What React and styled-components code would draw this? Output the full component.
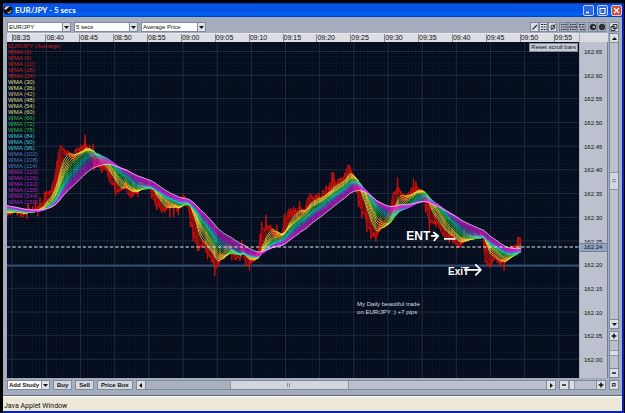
import React from "react";
import styled, { createGlobalStyle, css } from "styled-components";

const Global = createGlobalStyle`
  * { box-sizing: border-box; }
  html, body { margin: 0; background: #000; }
  body { font-family: "Liberation Sans", Arial, sans-serif; font-size: 6px; color: #111; }
  button, select, input { font: inherit; color: inherit; margin: 0; padding: 0; border-radius: 0; }
`;

/* ---------- price data: one sample every 5 seconds ---------- */

const VIEW_W = 571;
const VIEW_H = 337;
const STEP = 34.1 / 60;

const ANCHORS = [
  [-100, 150], [-60, 156], [-30, 161], [-8, 168], [0, 169], [8, 171], [15, 169], [23, 174], [31, 167],
  [37, 160], [39, 150], [44, 152], [49, 132], [52, 111], [55, 108], [62, 113], [70, 109], [78, 105],
  [83, 110], [89, 124], [98, 127], [104, 146], [111, 150], [118, 147], [123, 157], [130, 146],
  [138, 146], [144, 148], [149, 168], [154, 166], [165, 164], [171, 173], [175, 156], [180, 162],
  [184, 184], [190, 205], [197, 203], [203, 217], [208, 225], [213, 213], [219, 204], [225, 208],
  [231, 220], [235, 211], [239, 226], [246, 217], [251, 210], [253, 188], [261, 187], [268, 193],
  [274, 198], [278, 177], [281, 165], [288, 169], [296, 172], [301, 158], [309, 156], [318, 146],
  [328, 141], [336, 137], [341, 124], [345, 137], [350, 155], [357, 176], [364, 192], [368, 193],
  [372, 180], [378, 176], [383, 166], [386, 150], [394, 154], [402, 149], [409, 147], [414, 152],
  [418, 164], [423, 180], [431, 183], [438, 193], [446, 199], [452, 207], [456, 197], [463, 194],
  [471, 191], [475, 197], [477, 221], [480, 227], [485, 215], [492, 221], [498, 214], [505, 205],
  [508, 205], [511, 199], [514, 207],
];

function anchorAt(x) {
  let i = 0;
  while (i < ANCHORS.length - 2 && ANCHORS[i + 1][0] < x) i += 1;
  const [x0, y0] = ANCHORS[i];
  const [x1, y1] = ANCHORS[i + 1];
  return y0 + ((y1 - y0) * (x - x0)) / (x1 - x0);
}

const FIRST = -170;
const COUNT = Math.floor(514 / STEP) - FIRST;

const PRICES = (() => {
  let seed = 77;
  const random = () => {
    seed = (seed * 16807) % 2147483647;
    return seed / 2147483647 - 0.5;
  };
  let drift = 0;
  return Array.from({ length: COUNT }, (_, i) => {
    drift = drift * 0.7 + random() * 7;
    const spike = random() > 0.38 ? random() * 26 : 0;
    return anchorAt((i + FIRST) * STEP) + drift + spike;
  });
})();

function average(period) {
  const points = [];
  for (let i = -FIRST; i < COUNT; i += 1) {
    let sum = 0;
    let weight = 0;
    for (let k = 0; k < period; k += 1) {
      const w = period - k;
      sum += w * PRICES[i - k];
      weight += w;
    }
    points.push(`${((i + FIRST) * STEP).toFixed(1)},${(sum / weight).toFixed(1)}`);
  }
  return points.join(" ");
}

const bandColor = (p) => {
  if (p <= 24) return "#d80d08";
  if (p <= 60) return p === 42 ? "#efb85a" : "#f4ee35";
  if (p <= 78) return "#20d548";
  if (p <= 96) return "#25d6e2";
  if (p <= 114) return "#5a7fd0";
  return "#e01ae8";
};
const legendColor = (p) => {
  if (p <= 24) return "#c3201d";
  if (p <= 60) return p === 42 ? "#d8b97c" : "#dfdf8c";
  if (p <= 78) return "#2fb944";
  if (p <= 96) return "#4cc3cf";
  if (p <= 114) return "#5579b5";
  return "#a926b5";
};

const PERIODS = [1, ...Array.from({ length: 25 }, (_, i) => (i + 1) * 6)];
const LINES = PERIODS.map((p) => ({ p, points: average(p) }));
const WHITE_LINE = average(156);

const TIMES = ["08:35", "08:40", "08:45", "08:50", "08:55", "09:00", "09:05", "09:10", "09:15",
  "09:20", "09:25", "09:30", "09:35", "09:40", "09:45", "09:50", "09:55"];
const LEVELS = Array.from({ length: 14 }, (_, i) => (162.65 - i * 0.05).toFixed(2));

/* ---------- window frame ---------- */

const Desktop = styled.div`
  height: 100vh;
  min-height: 300px;
  padding: 3px 1px 0 3px;
  background: #000;
  display: flex;
`;
const Window = styled.section`
  flex: 1;
  min-width: 0;
  display: flex;
  flex-direction: column;
  border: solid #0a20b4;
  border-width: 0 2px 2px 0;
  background: #a3adbd;
`;
const TitleBar = styled.header`
  height: 14px;
  flex: none;
  display: flex;
  align-items: center;
  gap: 2px;
  color: #fff;
  background: linear-gradient(#0438b8 0, #0b56e6 2px, #0551e0 7px, #0266fc 12px, #0338a8 14px);
`;
const Title = styled.h1`
  flex: 1;
  margin: 0;
  font: 700 8px/12px Lato, "Liberation Sans", sans-serif;
`;
const CaptionButton = styled.button`
  width: 11px;
  height: 11px;
  display: grid;
  place-items: center;
  border: 1px solid #c3d3f5;
  border-radius: 2px;
  background: ${(p) => (p.$danger ? "#d9492a" : "#2d65dd")};
`;
const Captions = styled.div`
  display: flex;
  gap: 3px;
`;

/* ---------- toolbars ---------- */

const Toolbar = styled.div`
  flex: none;
  display: flex;
  align-items: flex-end;
  gap: 3px;
  height: 15px;
  padding: 0 3px 0 4px;
`;
const Spacer = styled.div`
  flex: 1;
`;
const Group = styled.div`
  display: flex;
  gap: ${(p) => p.$gap || 0}px;
`;
const bevel = css`
  border: 1px solid #7f8a9c;
  background: #d3d7e0;
`;
const Square = styled.button`
  ${bevel}
  width: ${(p) => (p.$narrow ? 9 : 10)}px;
  height: 10px;
  flex: none;
  display: grid;
  place-items: center;
  font-weight: 700;
  background: ${(p) => (p.$pressed ? "#aab1bf" : "#dcdfe6")};
`;
const Combo = styled.label`
  position: relative;
  display: flex;
  width: ${(p) => p.$width}px;
  height: 10px;
  border: 1px solid #7f8a9c;
  background: #fdfdfd;
`;
const Select = styled.select`
  appearance: none;
  flex: 1;
  min-width: 0;
  border: 0;
  padding: 0 0 0 1px;
  background: transparent;
  outline: 0;
  line-height: 8px;
  font-weight: ${(p) => (p.$strong ? 700 : 400)};
`;
const ComboArrow = styled.span`
  width: 8px;
  display: grid;
  place-items: center;
  border-left: 1px solid #7f8a9c;
  background: #dfe2e8;
  pointer-events: none;
`;
const Push = styled.button`
  ${bevel}
  flex: none;
  height: 10px;
  padding: 0 3px;
  font-weight: 700;
  line-height: 8px;
`;

/* ---------- chart area ---------- */

const Work = styled.main`
  flex: 1;
  min-height: 0;
  display: grid;
  grid-template: 9px minmax(0, 1fr) / minmax(0, 1fr) 28px 10px;
  padding: 1px 3px 0 4px;
  column-gap: 1px;
`;
const Ruler = styled.div`
  display: flex;
  padding-left: 0.8%;
  overflow: hidden;
  background: #dcdee3;
  border-top: 1px solid #e8eaee;
`;
const Tick = styled.time`
  flex: 0 0 5.972%;
  border-left: 1px solid #858b96;
  font-size: 7px;
  line-height: 8px;
`;
const RulerEnd = styled.div`
  background: #d9dce2;
`;
const Plot = styled.div`
  position: relative;
  overflow: hidden;
  background: #020816;
`;
const Drawing = styled.svg`
  display: block;
  position: absolute;
  inset: 0;
  width: 100%;
  height: 100%;
`;
const Legend = styled.ul`
  position: absolute;
  top: 1px;
  left: 1px;
  height: 48%;
  margin: 0;
  padding: 0;
  list-style: none;
  display: flex;
  flex-direction: column;
  justify-content: space-between;
  line-height: 6px;
`;
const LegendItem = styled.li`
  color: ${(p) => p.$color};
`;
const ResetButton = styled.button`
  position: absolute;
  top: 1px;
  right: 1px;
  padding: 0 1px;
  border: 1px solid #7f8a9c;
  background: #c8ccd6;
  line-height: 7px;
  white-space: nowrap;
`;
const Note = styled.p`
  position: absolute;
  left: ${(p) => p.$x}%;
  top: ${(p) => p.$y}%;
  margin: 0;
  color: ${(p) => (p.$size ? "#fff" : "#d8dce4")};
  font-size: ${(p) => p.$size || 6}px;
  font-weight: ${(p) => (p.$size ? 700 : 400)};
  line-height: ${(p) => p.$size || 8}px;
  white-space: pre;
`;
const PriceAxis = styled.div`
  position: relative;
  display: flex;
  flex-direction: column;
  justify-content: space-between;
  padding: 7px 0 15px 4px;
  background: #bcc1cd;
  border-right: 1px solid #6f7c93;
  line-height: 6px;
`;
const LastPrice = styled.output`
  position: absolute;
  inset: 59.7% 0 auto 0;
  padding-left: 4px;
  border: solid #6f7fa3;
  border-width: 1px 0;
  background: #97a4c0;
  line-height: 7px;
`;
const Rail = styled.div`
  grid-column: 3;
  grid-row: 1 / 3;
  display: flex;
  flex-direction: column;
  gap: 2px;
  min-height: 0;
`;
const Scroller = styled.div`
  display: flex;
  flex-direction: ${(p) => (p.$vertical ? "column" : "row")};
  flex: ${(p) => p.$flex || "1"};
  min-width: 0;
  min-height: 0;
`;
const Track = styled.div`
  flex: 1;
  display: flex;
  flex-direction: ${(p) => (p.$vertical ? "column" : "row")};
  background: #bac0cc;
  border: solid #7f8a9c;
  border-width: ${(p) => (p.$vertical ? "0 1px" : "1px 0")};
`;
const Gap = styled.div`
  flex: ${(p) => p.$grow} 1 0;
  background: ${(p) => (p.$dark ? "#a9b0be" : "transparent")};
`;
const Thumb = styled.div`
  flex: ${(p) => p.$grow} 1 0;
  display: grid;
  place-items: center;
  background: #d3d6df;
  border: 1px solid #8b95a6;
  border-width: ${(p) => (p.$vertical ? "1px 0" : "0 1px")};
`;
const Range = styled.input`
  appearance: none;
  flex: 1;
  min-width: 0;
  min-height: 0;
  width: ${(p) => (p.$vertical ? "10px" : "auto")};
  height: ${(p) => (p.$vertical ? "auto" : "10px")};
  writing-mode: ${(p) => (p.$vertical ? "vertical-lr" : "horizontal-tb")};
  background: #bac0cc;
  border: solid #7f8a9c;
  border-width: ${(p) => (p.$vertical ? "0 1px" : "1px 0")};
  &::-webkit-slider-thumb {
    appearance: none;
    width: ${(p) => (p.$vertical ? 8 : 6)}px;
    height: ${(p) => (p.$vertical ? 6 : 8)}px;
    background: #dcdfe6;
    border: 1px solid #8b95a6;
    border-width: ${(p) => (p.$vertical ? "1px 0" : "0 1px")};
  }
`;
const BottomBar = styled(Toolbar)`
  height: 18px;
  align-items: flex-start;
  padding: 2px 3px 0 4px;
  border-bottom: 1px solid #5f6676;
`;
const Status = styled.footer`
  flex: none;
  height: 15px;
  padding: 5px 0 0 1px;
  border-top: 1px solid #fff;
  background: #ece9d8;
  font: 7px/9px Roboto, "Liberation Sans", sans-serif;
`;

/* ---------- icons ---------- */

const TRIANGLES = {
  down: "M0 1H5L2.5 4Z",
  up: "M0 4H5L2.5 1Z",
  left: "M4 0V5L1 2.5Z",
  right: "M1 0V5L4 2.5Z",
};
const Arrow = ({ dir }) => (
  <svg width="5" height="5" viewBox="0 0 5 5" aria-hidden="true"><path d={TRIANGLES[dir]} fill="#111" /></svg>
);
const Glyph = ({ children }) => (
  <svg width="8" height="8" viewBox="0 0 8 8" fill="none" stroke="#2a2d33" aria-hidden="true">{children}</svg>
);
const PlusIcon = () => <Glyph><path d="M4 1.6v4.8M1.6 4h4.8" strokeWidth="1.4" stroke="#111" /></Glyph>;
const MinusIcon = () => <Glyph><path d="M2 4h4" strokeWidth="1.4" stroke="#111" /></Glyph>;

const AppIcon = () => (
  <svg width="10" height="10" viewBox="0 0 10 10" aria-hidden="true">
    <circle cx="5" cy="5" r="4.6" fill="#0a0c12" />
    <path d="M1.2 4.6Q2 1.2 5.4 1L7 1.6Q4.2 2.2 3.6 4.6Q2.4 3.8 1.2 4.6Z" fill="#e8edf5" />
    <path d="M4.2 7.2Q7 7 8.6 4.4Q8.8 7.4 6.2 8.6Q4.8 8.6 4.2 7.2Z" fill="#b9c2d0" />
  </svg>
);

const TOOL_GROUPS = [
  [
    ["Draw line", <path d="M1.5 6.5 6 2" strokeWidth="1.2" />],
    ["Horizontal lines", <path d="M1 1.5h6M1 6.5h6M1 4h6" strokeDasharray="2 .6" />],
    ["Clear drawings", <g><circle cx="3.8" cy="4.2" r="2" /><path d="M2 7 6.5 1" /></g>],
  ],
  [
    ["Dotted grid", <path d="M1 1.5h6M1 4h6M1 6.5h6" strokeDasharray="1.4 .8" />, true],
    ["Solid grid", <g><path d="M1 1.5h6M1 6.5h6" strokeDasharray="1.4 .8" /><path d="M0 4h8" /></g>, true],
    ["Dashed grid", <path d="M1 1.5h6M1 4h6M2 6.5h5" strokeDasharray="2 .8" />, true],
  ],
  [
    ["Outline mode", <g><circle cx="4" cy="4" r="2.8" fill="#222" /><circle cx="4.8" cy="4" r="1.2" fill="#aab1bf" stroke="none" /></g>, true],
    ["Filled mode", <circle cx="4" cy="4" r="2.8" fill="#333" />, true],
  ],
];

/* ---------- parts ---------- */

function ComboBox({ label, value, width, strong }) {
  return (
    <Combo $width={width}>
      <Select aria-label={label} defaultValue={value} $strong={strong}>
        <option>{value}</option>
      </Select>
      <ComboArrow><Arrow dir="down" /></ComboArrow>
    </Combo>
  );
}

function ChartDrawing() {
  return (
    <Drawing viewBox={`0 0 ${VIEW_W} ${VIEW_H}`} preserveAspectRatio="none" role="img" aria-label="EUR/JPY price with weighted moving averages">
      <g stroke="#0a1528" strokeWidth="1">
        {Array.from({ length: 168 }, (_, i) => <path key={i} d={`M${5.2 + (i - 1) * 3.41} 0V337`} />)}
        {Array.from({ length: 142 }, (_, i) => <path key={i} d={`M0 ${0.2 + i * 2.375}H571`} />)}
      </g>
      <g stroke="#212c40" strokeWidth="1">
        {TIMES.map((t, i) => <path key={t} d={`M${5.2 + i * 34.1} 0V337`} />)}
        {LEVELS.map((l, i) => <path key={l} d={`M0 ${9.5 + i * 23.75}H571`} />)}
      </g>
      <path d="M0 224.5H571" stroke="#304872" strokeWidth="1.6" />
      <g fill="none" strokeLinejoin="round">
        {LINES.map(({ p, points }) => (
          <polyline key={p} points={points} stroke={bandColor(p)} strokeWidth={p <= 24 ? 0.9 : 0.8} />
        ))}
        <polyline points={WHITE_LINE} stroke="#f3dff5" strokeWidth="0.9" />
      </g>
      <path d="M0 205.5H571" stroke="#e6e8ec" strokeDasharray="3.4 2" />
      <g fill="none" stroke="#fff" strokeWidth="1.8" strokeLinecap="round" strokeLinejoin="round">
        <path d="M424 194.5h6M426 191l4.500 3.500-4 4.500" />
        <path d="M437 197.500h10" />
        <path d="M457 228.500h15M468 223.500l5 5-5 5" />
      </g>
    </Drawing>
  );
}

export default function App() {
  return (
    <>
      <Global />
      <Desktop>
        <Window>
          <TitleBar>
            <AppIcon />
            <Title>EUR/JPY - 5 secs</Title>
            <Captions>
              <CaptionButton aria-label="Minimize">
                <svg width="7" height="7"><path d="M1 5.5h3" stroke="#fff" strokeWidth="1.6" /></svg>
              </CaptionButton>
              <CaptionButton aria-label="Maximize">
                <svg width="7" height="7"><path d="M1 1.5h5.5M1 1v5.5h5V1" stroke="#fff" fill="none" /></svg>
              </CaptionButton>
              <CaptionButton aria-label="Close" $danger>
                <svg width="7" height="7"><path d="M1 1l5 5M6 1l-5 5" stroke="#fff" strokeWidth="1.4" /></svg>
              </CaptionButton>
            </Captions>
          </TitleBar>

          <Toolbar>
            <ComboBox label="Instrument" value="EUR/JPY" width={64} />
            <ComboBox label="Interval" value="5 secs" width={64} />
            <ComboBox label="Price type" value="Average Price" width={65} />
            <Spacer />
            <Group $gap={2}>
              {TOOL_GROUPS.map((group, i) => (
                <Group key={i}>
                  {group.map(([label, icon, pressed]) => (
                    <Square key={label} aria-label={label} $narrow $pressed={pressed}><Glyph>{icon}</Glyph></Square>
                  ))}
                </Group>
              ))}
            </Group>
            <Square aria-label="Detach window">
              <Glyph><path d="M3 1.5h4v4H3zM1 3.5h4v4H1z" fill="#dcdfe6" /></Glyph>
            </Square>
          </Toolbar>

          <Work>
            <Ruler>{TIMES.map((t) => <Tick key={t}>{t}</Tick>)}</Ruler>
            <RulerEnd />
            <Plot>
              <ChartDrawing />
              <Legend>
                <LegendItem $color="#c3201d">EUR/JPY (Average)</LegendItem>
                {PERIODS.map((p) => <LegendItem key={p} $color={legendColor(p)}>WMA ({p})</LegendItem>)}
              </Legend>
              <ResetButton>Reset scroll bars</ResetButton>
              <Note $x={69.8} $y={56} $size={12}>ENT</Note>
              <Note $x={77.1} $y={67} $size={10}>ExiT</Note>
              <Note $x={61.2} $y={76.8}>{"My Daily beautiful trade\non EUR/JPY :) +7 pips"}</Note>
            </Plot>
            <PriceAxis>
              {LEVELS.map((l) => <span key={l}>{l}</span>)}
              <LastPrice>162.24</LastPrice>
            </PriceAxis>
            <Rail>
              <Scroller $vertical $flex="298">
                <Square aria-label="Scroll up"><Arrow dir="up" /></Square>
                <Track $vertical role="scrollbar" aria-label="Price scroll" aria-orientation="vertical" aria-valuenow={50}>
                  <Gap $grow={130} />
                  <Thumb $vertical $grow={16}>
                    <svg width="4" height="4"><path d="M0 .5h4M0 2.5h4" stroke="#868d9a" /></svg>
                  </Thumb>
                  <Gap $grow={131} />
                </Track>
                <Square aria-label="Scroll down"><Arrow dir="down" /></Square>
              </Scroller>
              <Scroller $vertical $flex="47">
                <Square aria-label="Zoom price in"><PlusIcon /></Square>
                <Range $vertical type="range" aria-label="Price zoom" min="0" max="100" defaultValue="44" />
                <Square aria-label="Zoom price out"><MinusIcon /></Square>
              </Scroller>
            </Rail>
          </Work>

          <BottomBar>
            <ComboBox label="Add study" value="Add Study" width={43} strong />
            <Push>Buy</Push>
            <Push>Sell</Push>
            <Push>Price Box</Push>
            <Scroller>
              <Square aria-label="Scroll left"><Arrow dir="left" /></Square>
              <Track role="scrollbar" aria-label="Time scroll" aria-orientation="horizontal" aria-valuenow={30}>
                <Gap $grow={86} $dark />
                <Thumb $grow={119}>
                  <svg width="4" height="4"><path d="M.5 0v4M2.5 0v4" stroke="#868d9a" /></svg>
                </Thumb>
                <Gap $grow={201} />
              </Track>
              <Square aria-label="Scroll right"><Arrow dir="right" /></Square>
            </Scroller>
            <Scroller $flex="0 0 47px">
              <Square aria-label="Zoom time out"><MinusIcon /></Square>
              <Range type="range" aria-label="Time zoom" min="0" max="100" defaultValue="0" />
              <Square aria-label="Zoom time in"><PlusIcon /></Square>
            </Scroller>
            <Square aria-label="Reset">R</Square>
          </BottomBar>

          <Status>Java Applet Window</Status>
        </Window>
      </Desktop>
    </>
  );
}
